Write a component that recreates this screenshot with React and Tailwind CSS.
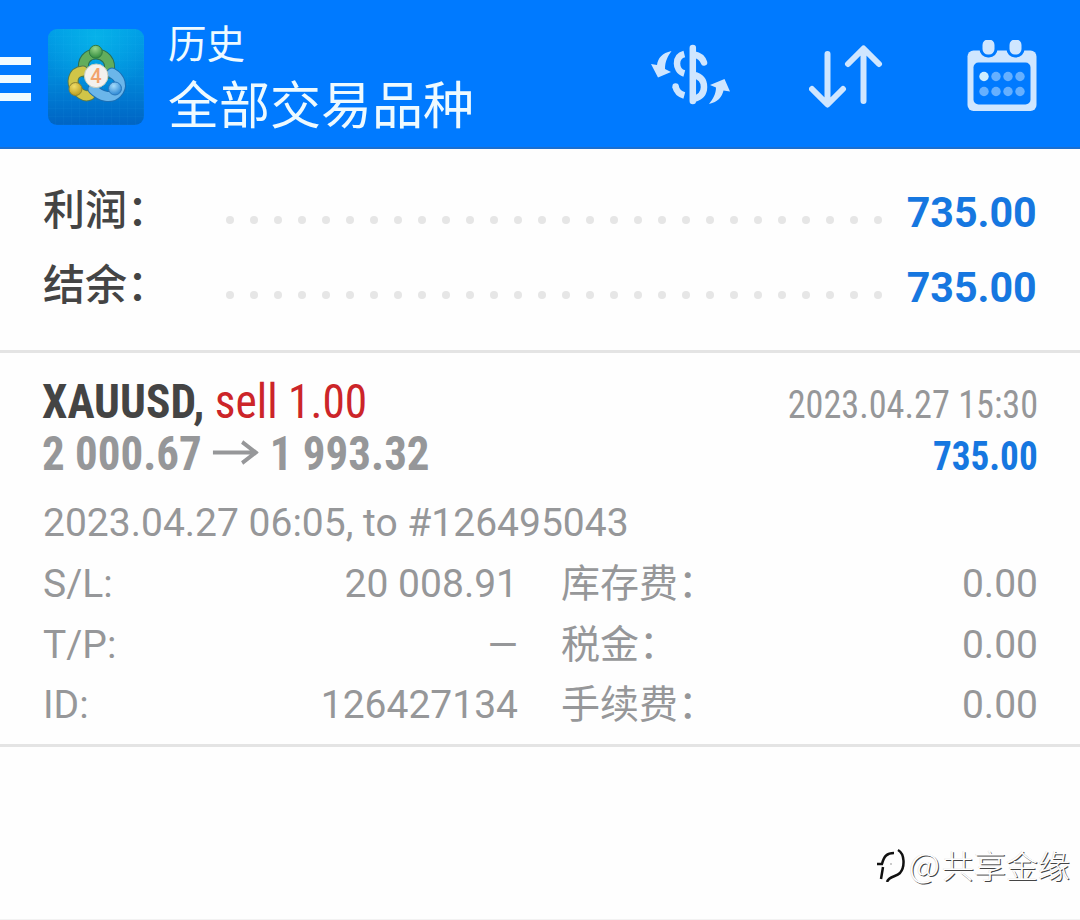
const totals = [
  { label: "利润：", value: "735.00" },
  { label: "结余：", value: "735.00" },
];

const details = [
  { label: "S/L:", value: "20 008.91", feeLabel: "库存费：", fee: "0.00" },
  { label: "T/P:", value: "—", feeLabel: "税金：", fee: "0.00" },
  { label: "ID:", value: "126427134", feeLabel: "手续费：", fee: "0.00" },
];

const AppLogo = () => (
  <svg className="w-24 h-24 shrink-0" viewBox="0 0 96 96">
    <defs>
      <linearGradient id="tile" x1="0" y1="0" x2="0" y2="1">
        <stop offset="0" stopColor="#009be6" />
        <stop offset="0.5" stopColor="#0088da" />
        <stop offset="1" stopColor="#0064c4" />
      </linearGradient>
      <radialGradient id="glow" cx="0.5" cy="0.08" r="0.6">
        <stop offset="0" stopColor="#08b8ea" stopOpacity="0.8" />
        <stop offset="1" stopColor="#08b8ea" stopOpacity="0" />
      </radialGradient>
      <pattern id="lines" width="8" height="8" patternUnits="userSpaceOnUse">
        <path d="M8 0V8H0" fill="none" stroke="#3fc0f0" strokeOpacity="0.08" />
      </pattern>
      <radialGradient id="green" cx="0.45" cy="0.25" r="0.75">
        <stop offset="0" stopColor="#9ad68a" />
        <stop offset="1" stopColor="#2f8a3c" />
      </radialGradient>
      <radialGradient id="yellow" cx="0.4" cy="0.3" r="0.75">
        <stop offset="0" stopColor="#f0dd68" />
        <stop offset="1" stopColor="#b89a1c" />
      </radialGradient>
      <radialGradient id="blue" cx="0.4" cy="0.3" r="0.75">
        <stop offset="0" stopColor="#a6dcfb" />
        <stop offset="1" stopColor="#2382d2" />
      </radialGradient>
    </defs>
    <rect width="96" height="96" rx="9" fill="url(#tile)" />
    <rect width="96" height="96" rx="9" fill="url(#glow)" />
    <rect width="96" height="96" rx="9" fill="url(#lines)" />
    {/* three figures joined around the badge */}
    <g fill="none" strokeLinecap="round">
      <path d="M36 43C33 31 40 25 48 25S64 31 61 44" stroke="#2c6f52" strokeWidth="11" />
      <path d="M36 43C33 31 40 25 48 25S64 31 61 44" stroke="#62ad5c" strokeWidth="9" />
      <path d="M35 42C24 43 23 54 28 60S38 68 42 66" stroke="#55794c" strokeWidth="11" />
      <path d="M35 42C24 43 23 54 28 60S38 68 42 66" stroke="#d0c548" strokeWidth="9" />
      <path d="M64 44C73 49 75 58 69 64S53 68 45 60" stroke="#1c6fb4" strokeWidth="11" />
      <path d="M64 44C73 49 75 58 69 64S53 68 45 60" stroke="#6bb6ea" strokeWidth="9" />
    </g>
    <circle cx="47.800" cy="22.800" r="6.500" fill="url(#green)" stroke="#2e7a45" />
    <circle cx="27.500" cy="60" r="6.500" fill="url(#yellow)" stroke="#8c8432" />
    <circle cx="67" cy="59.500" r="6.500" fill="url(#blue)" stroke="#2a78bd" />
    <circle cx="48.200" cy="46.800" r="11.800" fill="#f4f1ee" stroke="#c5cdbd" />
    <text
      x="48"
      y="54"
      textAnchor="middle"
      fontSize="20"
      fontWeight="500"
      fontFamily="Roboto, sans-serif"
      fill="#f2a36c"
    >
      4
    </text>
  </svg>
);

const CurrencyIcon = () => (
  <svg className="w-[79px] h-[62px]" viewBox="0 0 79 62" fill="none">
    <g stroke="#cfe6ff" strokeWidth="6.500">
      <path d="M41.800 4V57" strokeLinecap="round" />
      <path d="M33.300 10C27.500 11.500 26 16 26 19.500S28 28 33.300 29.500" />
      <path d="M43 10.500C49 11.500 51.500 14 53 18.500" strokeLinecap="round" />
      <path d="M24.500 42.500C25.500 47 28 50 33.300 51.500" />
      <path d="M43 31C50 32.500 53 37 53 43S50 53 43 55" />
    </g>
    <circle cx="24.600" cy="42.500" r="3.200" fill="#cfe6ff" />
    <path d="M20.500 7C11 9 7 14 6 21L0 20L7 33.500L20 28L14 25C14 17 17 12 20.500 7Z" fill="#cfe6ff" />
    <path d="M58 60C67 58 71 53 72.500 46.500L79 47.500L73.500 35L59 41L65 43.500C65 50 62 55 58 60Z" fill="#cfe6ff" />
  </svg>
);

const SortIcon = () => (
  <svg
    className="w-[74px] h-[66px]"
    viewBox="0 0 74 66"
    fill="none"
    stroke="#cfe6ff"
    strokeWidth="6"
    strokeLinecap="round"
    strokeLinejoin="round"
  >
    <path d="M18.500 10V60M3 45L18.500 60.500L34 45" />
    <path d="M54.500 57V5M39 20L54.500 4.500L70 20" />
  </svg>
);

const CalendarIcon = () => (
  <svg className="w-[70px] h-[72px]" viewBox="0 0 70 72">
    <rect x="0.500" y="10.500" width="69" height="60.500" rx="6" fill="#cfe6ff" />
    <rect x="6.500" y="22.500" width="57" height="42" rx="5" fill="#007aff" />
    {[21.5, 48.5].map((x) => (
      <rect
        key={x}
        x={x - 7.5}
        y="-2"
        width="15"
        height="18"
        rx="7"
        fill="#cfe6ff"
        stroke="#007aff"
        strokeWidth="3"
      />
    ))}
    {[17, 29, 41, 53].map((x) => (
      <g key={x}>
        <circle cx={x} cy="36.500" r="4.700" fill={x === 17 ? "#cfeeff" : "#66b0ff"} />
        <circle cx={x} cy="51.500" r="4.700" fill="#66b0ff" />
      </g>
    ))}
  </svg>
);

const Header = () => (
  <header className="flex h-[149px] border-b-2 border-[#1b6fd0] bg-[#007aff] text-[#eefaff]">
    <div className="mt-[57px] flex w-[31px] flex-col gap-2.5">
      <span className="h-2 bg-[#f0fbff]" />
      <span className="h-2 bg-[#f0fbff]" />
      <span className="h-2 bg-[#f0fbff]" />
    </div>
    <div className="ml-[17px] mt-[29px]">
      <AppLogo />
    </div>
    <div className="ml-6 mt-[19px]">
      <p className="text-[38.500px] leading-[52px]">历史</p>
      <p className="mt-px text-[51px] leading-[70px]">全部交易品种</p>
    </div>
    <div className="ml-auto mr-[43px] mt-10 flex">
      <div className="mt-1 mr-[79px]">
        <CurrencyIcon />
      </div>
      <div className="mt-1 mr-[84px]">
        <SortIcon />
      </div>
      <CalendarIcon />
    </div>
  </header>
);

const TotalRow = ({ label, value }) => (
  <div className="flex h-[75px] items-center text-[42px] leading-[75px]">
    <span className="w-[183px] whitespace-nowrap pb-1 font-medium text-[#444]">{label}</span>
    <div className="flex gap-4 pt-[14px]">
      {Array.from({ length: 28 }, (_, i) => (
        <i key={i} className="size-2 rounded-full bg-[#e6e6e6]" />
      ))}
    </div>
    <span className="ml-auto origin-right scale-x-98 font-bold text-[#1677e0]">{value}</span>
  </div>
);

const Deal = () => (
  <section className="h-[394px] border-b-3 border-[#e4e4e4] pr-[42px] pl-[43px] pt-[23px] text-[#969799]">
    <div className="flex h-[52px] items-baseline justify-between leading-[52px] font-stretch-condensed">
      <p className="-ml-px origin-left scale-x-[0.926] text-[49px]">
        <span className="font-bold text-[#444]">XAUUSD,</span>{" "}
        <span className="text-[#cc2529]">sell 1.00</span>
      </p>
      <p className="origin-right scale-x-[0.917] text-[39.500px]">2023.04.27 15:30</p>
    </div>
    <div className="mt-px flex h-[50px] items-center justify-between font-bold leading-[50px] font-stretch-condensed">
      <p className="-ml-px flex origin-left scale-x-[0.918] items-center text-[49px]">
        2 000.67
        <svg className="mx-3 h-7 w-[50px]" viewBox="0 0 50 28" fill="none" stroke="#969799" strokeWidth="4">
          <path d="M0 12.500H47M32 2L47 12.500L32 23" />
        </svg>
        1 993.32
      </p>
      <p className="origin-right scale-x-93 pt-1.5 text-[40px] text-[#1677e0]">735.00</p>
    </div>
    <p className="mt-[14px] text-[39px] leading-[60px]">2023.04.27 06:05, to #126495043</p>
    <div className="mt-px text-[39px] leading-[60.500px]">
      {details.map((row) => (
        <div key={row.label} className="grid grid-cols-[475px_1fr] gap-[43px]">
          <p className="flex justify-between">
            <span>{row.label}</span>
            <span>{row.value}</span>
          </p>
          <p className="flex justify-between">
            <span>{row.feeLabel}</span>
            <span>{row.fee}</span>
          </p>
        </div>
      ))}
    </div>
  </section>
);

const Watermark = () => (
  <div className="mt-auto mr-[10px] mb-[29px] flex items-center justify-end font-['Noto_Sans_CJK_SC',sans-serif] text-[32px] leading-[52px] font-light text-white [text-shadow:1px_1px_0_#444,-0.500px_-0.500px_0_#ddd]">
    <svg className="mr-1 h-9 w-7" viewBox="0 0 28 36" fill="none" stroke="#111">
      <path d="M4 33L6 21M0 18H6M5 18C7 10 10 7 17 7" strokeWidth="2.500" />
      <path d="M21 4C28 8 28 21 23 27C19 31 12 30 10 36" strokeWidth="2.500" />
      <path d="M13 18H15" stroke="#999" />
    </svg>
    <span className="mr-0.5 text-[34px]">@</span>
    共享金缘
  </div>
);

export default function App() {
  return (
    <div
      lang="zh-CN"
      className="flex h-[920px] w-[1080px] flex-col overflow-hidden border-b border-[#f2f2f2] bg-[#fefefe] font-['Roboto','Noto_Sans_CJK_SC',sans-serif]"
    >
      <Header />
      <section className="h-[204px] border-b-3 border-[#e4e4e4] px-[43px] pt-[26px]">
        {totals.map((row) => (
          <TotalRow key={row.label} {...row} />
        ))}
      </section>
      <Deal />
      <Watermark />
    </div>
  );
}
